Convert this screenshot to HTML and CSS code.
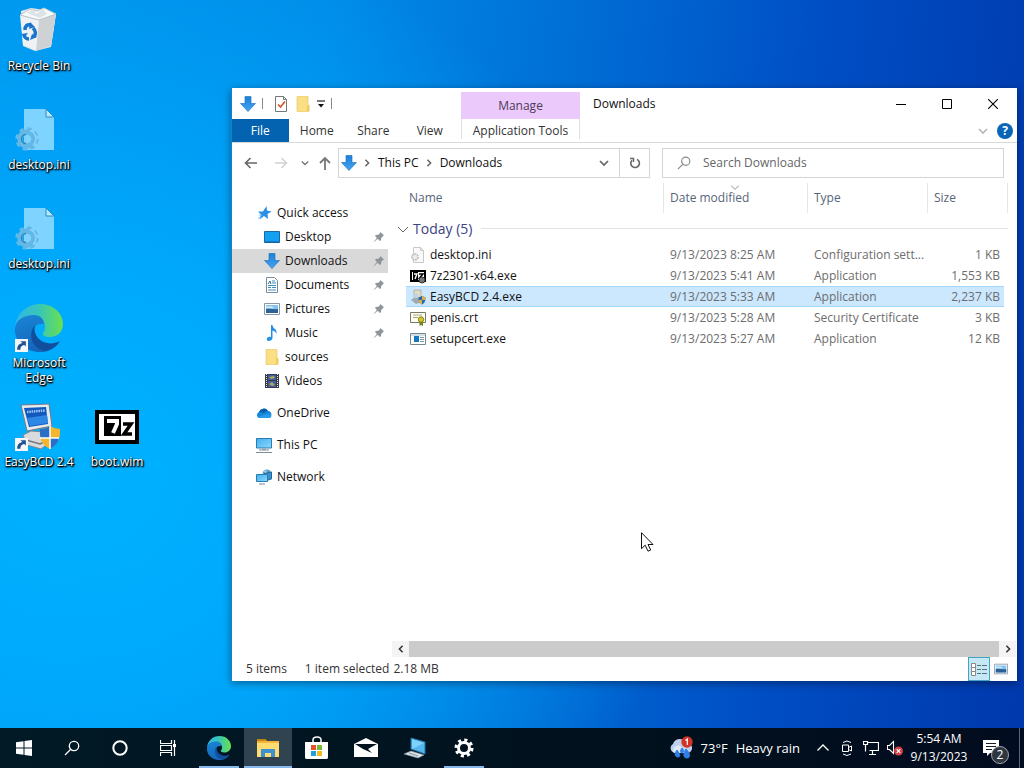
FILE: index.html
```html
<!DOCTYPE html>
<html lang="en">
<head>
<meta charset="utf-8">
<meta name="viewport" content="width=device-width, initial-scale=1">
<title>Downloads</title>
<link rel="stylesheet" href="styles.css">
</head>
<body>
<svg class="defs" aria-hidden="true">
  <defs>
    <linearGradient id="arrowBlue" x1="0" y1="0" x2="0" y2="1"><stop offset="0" stop-color="#1d7fd8"/><stop offset="1" stop-color="#45a4f2"/></linearGradient>
    <linearGradient id="edgeA" x1="0" y1="0.3" x2="1" y2="0.3"><stop offset="0" stop-color="#2fb5ea"/><stop offset="0.5" stop-color="#37c6b8"/><stop offset="1" stop-color="#6be04b"/></linearGradient>
    <linearGradient id="edgeB" x1="0" y1="0" x2="0.4" y2="1"><stop offset="0" stop-color="#1a86d8"/><stop offset="1" stop-color="#1465b8"/></linearGradient>
    <linearGradient id="screen" x1="0" y1="0" x2="1" y2="1"><stop offset="0" stop-color="#3fb0ee"/><stop offset="1" stop-color="#8fd8fb"/></linearGradient>
  </defs>
  <symbol id="i-down" viewBox="0 0 16 16"><path d="M5 .5h6v7h4.500L8 15.500.500 7.500H5z" fill="url(#arrowBlue)" stroke="#2178c4" stroke-width=".7"/></symbol>
  <symbol id="i-pin" viewBox="0 0 12 12"><path d="M7.500 1 11 4.500 9.800 5.200 8.300 6.700 8 9.300 6.900 10 4.700 7.700 1 11 .700 10.700 3.900 7 2 5l.8-1 2.600-.3L6.900 2.200z" fill="#8d949a"/></symbol>
  <symbol id="i-folder" viewBox="0 0 16 16"><path d="M2 .5h11v15H2z" fill="#fbdf83" stroke="#e8c45c" stroke-width=".6"/><path d="M12 9h2.500v6.500H12z" fill="#f1cb5f"/></symbol>
  <symbol id="i-chev" viewBox="0 0 10 10"><path d="M1 3l4 4 4-4" fill="none" stroke="currentColor" stroke-width="1.700"/></symbol>
  <symbol id="i-thin" viewBox="0 0 10 10"><path d="M0 3l5 5 5-5" fill="none" stroke="currentColor" stroke-width="1"/></symbol>
  <symbol id="i-chevr" viewBox="0 0 10 10"><path d="M3 1l4 4-4 4" fill="none" stroke="currentColor" stroke-width="1.900"/></symbol>
  <symbol id="i-search" viewBox="0 0 16 16"><circle cx="10" cy="6" r="4.700" fill="none" stroke="currentColor" stroke-width="1.300"/><path d="M6.500 9.500 1 15" stroke="currentColor" stroke-width="1.300"/></symbol>
  <symbol id="i-ini" viewBox="0 0 48 48">
    <path d="M9 3h22l8 8v33H9z" fill="#7fd3ff"/><path d="M31 3v8h8z" fill="#b6e8ff" stroke="#278ec5" stroke-width="1"/>
    <g transform="translate(12 33)"><circle r="7" fill="none" stroke="#62b8e6" stroke-width="5.500"/><circle r="10" fill="none" stroke="#62b8e6" stroke-width="3.500" stroke-dasharray="4.200 3.654"/><path d="M-1-4.500a4.500 4.500 0 0 0 0 9" fill="none" stroke="#2f86bd" stroke-width="1.500"/><path d="M3-8.500a9 9 0 0 1 3 15" fill="none" stroke="#8fd4f6" stroke-width="1.500"/></g>
  </symbol>
  <symbol id="i-edge" viewBox="0 0 48 48">
    <path d="M0 24C1 9 12 0 25 0c14 0 23 10 23 20 0 8-6 13-13 13-6 0-8-2-7-4 4-4 3-16-9-17C9 11 1 17 0 24z" fill="url(#edgeA)"/>
    <path d="M0 24C1 16 9 11 19 11c6 0 10 4 10 9-13-2-16 13-5 20 7 4 15 2 20-2C39 46 31 49 23 48 9 47-1 37 0 24z" fill="url(#edgeB)"/>
    <path d="M21 20c-9 9-5 24 9 27 8-2 12-5 15-10-9 5-20 2-24-6-2-4-2-8 0-11z" fill="#114f9e"/>
  </symbol>
  <symbol id="i-short" viewBox="0 0 12 12"><path d="M0 0h12v12H0z" fill="#f4f6fa"/><path d="M2 10c0-4 2-6 5-6L5 2h5v5L8.500 5.500C5.500 6 5 8 5 10z" fill="#205092"/></symbol>
  <symbol id="i-photo" viewBox="0 0 16 16"><path d="M.5 2.500h15v11H.5z" fill="#fff" stroke="#8c98a5"/><path d="M2 4h12v8H2z" fill="#83c4f4"/><path d="M2 8c3-3 5 1 12 0v4H2z" fill="#2c6296"/><path d="M2 5.500h6l2 2H2z" fill="#d4efff"/></symbol>
  <symbol id="i-pc" viewBox="0 0 16 16"><path d="M.5 1.500h15v9.500H.5z" fill="url(#screen)" stroke="#287cb1"/><path d="M6 11h4v2H6z" fill="#a5b5c3"/><path d="M3 13h10M0 15.500h16" stroke="#7d8b97" stroke-width="1"/></symbol>
</svg>

<div class="desktop">
  <main class="workspace">
    <div class="icons">
      <a class="icon" href="#bin">
        <svg viewBox="4 2 48 48"><path d="M10 6 20 3l14 2 11 4-5 33-16 4-12-5z" fill="#e5e8ea"/><path d="M9 10 28 15l17-7-5 33-15 4-13-5z" fill="#f0f1f2"/><path d="M28 15l17-7-5 33-15 5z" fill="#cfd2d5"/><path d="M9 10l10-6 7 2 7-3 12 6-17 6z" fill="#f9fafa" stroke="#b9c2c9"/><path d="m16 8 6-4 3 5 7-5 4 5-7 4z" fill="#dce2e5"/><g fill="none" stroke="#1975ce" stroke-width="3.500"><path d="M14 25c0-4 2-6 6-5M22 23c3 3 3 6 1 9M18 34c-3 0-5-2-5-5"/></g><path d="m19 17 5 5-6 2zM26 32l-7 3 2-6zM10 29l7-1-3 4z" fill="#1975ce"/></svg>
        <span>Recycle Bin</span></a>
      <a class="icon" href="#ini1"><svg><use href="#i-ini"/></svg><span>desktop.ini</span></a>
      <a class="icon" href="#ini2"><svg><use href="#i-ini"/></svg><span>desktop.ini</span></a>
      <a class="icon" href="#edge"><svg viewBox="0 0 48 48"><use href="#i-edge" width="48" height="48"/><use href="#i-short" x="0" y="35" width="13" height="13"/></svg><span>Microsoft Edge</span></a>
      <a class="icon" href="#easybcd">
        <svg viewBox="0 0 48 48"><path d="M8 32l8-4 16 1 5 9-11 8-14-4z" fill="#d9dadd" stroke="#80858c"/><path d="M11 37l14 4 10-5" fill="none" stroke="#777" stroke-width="1.500"/><path d="M6 2l28-1 3 22-25 5z" fill="#e6e9ed" stroke="#717985"/><path d="M9 5l22-1 2 17-19 3z" fill="#1358bc"/><path d="M12 15l20-3 1 8-18 3z" fill="#2d87e4"/><path d="M12 9l18-1.500" stroke="#9cc6f5" stroke-width="2.500" stroke-dasharray="1.500 .8"/><path d="M35 23c3 2 6 3 10 3 0 10-2 15-10 20-8-5-10-10-10-20 4 0 7-1 10-3z" fill="#f5b52d"/><path d="M35 23c3 2 6 3 10 3q0 5-1 9h-9zM35 35v11c-6-3-9-7-9.500-11z" fill="#f5b52d"/><path d="M35 23v12H25.500a30 30 0 0 1-.5-9c4 0 7-1 10-3zM35 35h9c-1 5-4 8-9 11z" fill="#2a6fc4"/><path d="M35 23v23M25 35h19" stroke="#fff" stroke-width="1.500"/><use href="#i-short" x="0" y="35" width="13" height="13"/></svg>
        <span>EasyBCD 2.4</span></a>
      <a class="icon" href="#boot">
        <svg viewBox="0 0 48 48"><path d="M4 9h40v30H4z" fill="#fff" stroke="#000" stroke-width="4"/><path d="M11 13h17v20H11z" fill="#000"/><path d="M14 18h10v3l-4 9" fill="none" stroke="#fff" stroke-width="4"/><path d="M30 21h8l-7 10h8" fill="none" stroke="#000" stroke-width="3.500"/></svg>
        <span>boot.wim</span></a>
    </div>

    <section class="window" aria-label="Downloads">
      <header class="header">
        <div class="head-left">
          <div class="quick">
            <svg class="s16"><use href="#i-down"/></svg><i class="bar"></i>
            <button aria-label="Properties"><svg class="s16" viewBox="0 0 16 16"><path d="M2.500.5h8l3 3v12h-11z" fill="#fff" stroke="#777"/><path d="M10.500.5v3h3" fill="none" stroke="#777"/><path d="M5 8.500l2.500 2.500L12 5.500" fill="none" stroke="#d4562d" stroke-width="1.700"/></svg></button>
            <button aria-label="New folder"><svg class="s16"><use href="#i-folder"/></svg></button>
            <button aria-label="Customize toolbar"><svg class="s8" viewBox="0 0 8 8"><path d="M0 1h8" stroke="#222" stroke-width="1.200"/><path d="M1 4h6L4 7.500z" fill="#111"/></svg></button><i class="bar"></i>
          </div>
          <nav class="tabs"><button class="tab file">File</button><button class="tab">Home</button><button class="tab">Share</button><button class="tab">View</button></nav>
        </div>
        <div class="context"><div class="manage">Manage</div><button class="tools">Application Tools</button></div>
        <div class="head-right">
          <div class="titlebar"><h1>Downloads</h1>
            <div class="controls">
              <button aria-label="Minimize"><svg class="s10" viewBox="0 0 10 10"><path d="M0 5.500h10" stroke="#000"/></svg></button>
              <button aria-label="Maximize"><svg class="s10" viewBox="0 0 10 10"><path d="M.5.500h9v9h-9z" fill="none" stroke="#000"/></svg></button>
              <button aria-label="Close"><svg class="s10" viewBox="0 0 10 10"><path d="M0 0l10 10M10 0 0 10" stroke="#000" stroke-width="1.100"/></svg></button>
            </div>
          </div>
          <div class="ribbon-end"><button class="pale" aria-label="Expand the ribbon"><svg class="s10"><use href="#i-chev"/></svg></button><button class="help" aria-label="Help">?</button></div>
        </div>
      </header>

      <div class="address-row">
        <div class="nav-buttons">
          <button class="n-back" aria-label="Back"><svg class="s14" viewBox="0 0 14 14"><path d="M13 7H2M6.500 2 1.500 7l5 5" fill="none" stroke="#666" stroke-width="1.600"/></svg></button>
          <button class="n-fwd" aria-label="Forward"><svg class="s14" viewBox="0 0 14 14"><path d="M1 7h11M7.500 2l5 5-5 5" fill="none" stroke="#d2d2d2" stroke-width="1.500"/></svg></button>
          <button class="n-recent" aria-label="Recent locations"><svg class="s8"><use href="#i-chev"/></svg></button>
          <button class="n-back" aria-label="Up"><svg class="s14" viewBox="0 0 14 14"><path d="M7 14V2M2 7l5-5 5 5" fill="none" stroke="#777" stroke-width="1.800"/></svg></button>
        </div>
        <div class="address">
          <svg class="s16"><use href="#i-down"/></svg>
          <svg class="s8 sep"><use href="#i-chevr"/></svg><button>This PC</button>
          <svg class="s8 sep"><use href="#i-chevr"/></svg><button>Downloads</button>
          <button class="drop" aria-label="Previous locations"><svg class="s10"><use href="#i-chev"/></svg></button>
          <button class="refresh" aria-label="Refresh"><svg class="s12" viewBox="0 0 12 12"><path d="M8 2.400A4.300 4.300 0 1 1 3 3.300" fill="none" stroke="#666" stroke-width="1.600"/><path d="M1 1.500h3.500V5" fill="none" stroke="#666" stroke-width="1.500"/></svg></button>
        </div>
        <label class="search"><svg class="s14"><use href="#i-search"/></svg><input type="search" placeholder="Search Downloads" aria-label="Search Downloads"></label>
      </div>

      <div class="body">
        <nav class="tree">
          <a class="node" href="#quick"><svg class="s16" viewBox="0 0 16 16"><path d="M10.500 1 11 5.500l4.500 1L11.500 9l.5 5-4-3-4.500 3.500 1.500-5L2 6.500h5z" fill="#2990e6"/><path d="M3 10h3M2 13h3" stroke="#7cbdf2"/></svg>Quick access</a>
          <a class="node sub" href="#desktop"><svg class="s16" viewBox="0 0 16 16"><path d="M.5 2.500h15v11H.5z" fill="#13a0f3" stroke="#1769a8"/><path d="M1 13h14" stroke="#135b97"/></svg>Desktop<svg class="pin"><use href="#i-pin"/></svg></a>
          <a class="node sub current" href="#downloads"><svg class="s16"><use href="#i-down"/></svg>Downloads<svg class="pin"><use href="#i-pin"/></svg></a>
          <a class="node sub" href="#documents"><svg class="s16" viewBox="0 0 16 16"><path d="M2.500.5h8l3 3v12h-11z" fill="#fff" stroke="#7b8b99"/><path d="M8 4h3M8 6h4M4 8.500h8M4 10.500h3M8 10.500h4M4 13h8" stroke="#3a8dc0"/><path d="M4 7l2-3 1 3" fill="none" stroke="#266e9d"/></svg>Documents<svg class="pin"><use href="#i-pin"/></svg></a>
          <a class="node sub" href="#pictures"><svg class="s16"><use href="#i-photo"/></svg>Pictures<svg class="pin"><use href="#i-pin"/></svg></a>
          <a class="node sub" href="#music"><svg class="s16" viewBox="0 0 16 16"><path d="M7 0h1.500c0 4 5 3.500 4 9-.5-2-2-3-4-3.500V13C8.500 15 6.500 16 4.500 16S2 13 4.500 12c1-.5 2-.3 2.500 0z" fill="#2490e4"/></svg>Music<svg class="pin"><use href="#i-pin"/></svg></a>
          <a class="node sub" href="#sources"><svg class="s16"><use href="#i-folder"/></svg>sources</a>
          <a class="node sub" href="#videos"><svg class="s16" viewBox="0 0 16 16"><path d="M1 1h14v14H1z" fill="#383b43"/><path d="M2.500 1v14M13.500 1v14" stroke="#e3e3e3" stroke-dasharray="1 1"/><path d="M4 2h8v5H4zM4 8h8v6H4z" fill="#3e5ea1"/><path d="M5 4l5-1 1 2-4 1zM5 11l3-2 3 3-3 1z" fill="#b5a84c"/></svg>Videos</a>
          <a class="node root" href="#onedrive"><svg class="s16" viewBox="0 0 16 16"><path d="M3 13a3.200 3.200 0 0 1 0-6 5 5 0 0 1 9-1 3.600 3.600 0 0 1 1 7z" fill="#1688dc"/><path d="M3 7a5 5 0 0 1 9-1c-2 0-3 1-4 2z" fill="#0b5ea9"/><path d="M2 13c3-3 7-4 11-4 3 1 3 4 0 4z" fill="#259ae9"/></svg>OneDrive</a>
          <a class="node root" href="#pc"><svg class="s16"><use href="#i-pc"/></svg>This PC</a>
          <a class="node root" href="#network"><svg class="s16" viewBox="0 0 16 16"><circle cx="11" cy="5" r="4.500" fill="#5e9fc7"/><path d="M8 2l4 4 3-1M10 0v8" stroke="#b3d7e9" fill="none"/><path d="M8.500 4.500 15.500 3v7l-7 2z" fill="#3a92cd" stroke="#206b9d"/><path d="M.5 5.500h11v7H.5z" fill="url(#screen)" stroke="#287cb1"/><path d="M3 15h6" stroke="#7d8b97"/></svg>Network</a>
        </nav>
        <div class="content">
          <div class="list">
          <table class="files">
            <colgroup><col class="c-lead"><col><col class="c-date"><col class="c-type"><col class="c-size"><col class="c-tail"></colgroup>
            <thead><tr><td></td><th scope="col">Name</th><th scope="col" class="sorted">Date modified<svg class="s8"><use href="#i-thin"/></svg></th><th scope="col">Type</th><th scope="col">Size</th><td></td></tr></thead>
            <tbody>
              <tr class="group"><th colspan="6" scope="rowgroup"><div><svg class="s10"><use href="#i-thin"/></svg><span>Today (5)</span><i></i></div></th></tr>
              <tr><td></td><td class="name"><svg class="s16" viewBox="0 0 16 16"><path d="M3.500.5h7l3 3v12h-10z" fill="#fafafa" stroke="#c8c8c8"/><path d="M10.500.5v3h3" fill="none" stroke="#c8c8c8"/><circle cx="5" cy="10" r="3" fill="#eee" stroke="#c4c8ca" stroke-width="2" stroke-dasharray="2 .6"/></svg>desktop.ini</td><td>9/13/2023 8:25 AM</td><td>Configuration sett...</td><td class="size">1 KB</td><td></td></tr>
              <tr><td></td><td class="name"><svg class="s16" viewBox="0 0 16 16"><path d="M1 3h14v10H1z" fill="#fff" stroke="#000" stroke-width="2"/><path d="M3 4h5v8H3z"/><path d="M4 6h3l-2 5" fill="none" stroke="#fff" stroke-width="1.400"/><path d="M9 6h4L9.500 10H13" fill="none" stroke="#000" stroke-width="1.500"/><circle cx="12" cy="12" r="3" fill="#777" stroke="#333"/></svg>7z2301-x64.exe</td><td>9/13/2023 5:41 AM</td><td>Application</td><td class="size">1,553 KB</td><td></td></tr>
              <tr class="selected"><td></td><td class="name"><svg class="s16" viewBox="0 0 16 16"><path d="M4 1h7v8H4z" fill="#e2dbc8" stroke="#aaa18d" stroke-width=".7"/><path d="M1 11l4-3 7 1v4l-6 2z" fill="#9eabb4"/><path d="M3 5h5v4H3z" fill="#bed3dd"/><path d="M12 7l3.500 1.500c0 4-1 5.500-3.500 7-2.500-1.500-3.500-3-3.500-7z" fill="#276aab"/><path d="M12 7l3.500 1.500V11H12zM12 11v4.500C10 14.500 9 13 8.600 11z" fill="#dfb143"/></svg>EasyBCD 2.4.exe</td><td>9/13/2023 5:33 AM</td><td>Application</td><td class="size">2,237 KB</td><td></td></tr>
              <tr><td></td><td class="name"><svg class="s16" viewBox="0 0 16 16"><path d="M.5 2.500h15v10H.5z" fill="#fffef2" stroke="#777765"/><path d="M3 5h9M3 7.500h5" stroke="#aaa58d"/><path d="M9.500 11v5l1.500-1 2 1v-5z" fill="#758222"/><circle cx="11" cy="9.500" r="2.700" fill="#d1ca24" stroke="#858018"/></svg>penis.crt</td><td>9/13/2023 5:28 AM</td><td>Security Certificate</td><td class="size">3 KB</td><td></td></tr>
              <tr><td></td><td class="name"><svg class="s16" viewBox="0 0 16 16"><path d="M.5 2.500h15v11H.5z" fill="#fff" stroke="#77868f"/><path d="M1 3h14v2H1z" fill="#d3dee5"/><path d="M4 5h5v6H4z" fill="#1478c0"/><path d="M10 6.500h4M10 8.500h4M10 10.500h4" stroke="#7397af"/></svg>setupcert.exe</td><td>9/13/2023 5:27 AM</td><td>Application</td><td class="size">12 KB</td><td></td></tr>
            </tbody>
          </table>
          </div>
          <div class="scroll"><button class="flip" aria-label="Scroll left"><svg class="s8"><use href="#i-chevr"/></svg></button><div class="thumb"></div><button aria-label="Scroll right"><svg class="s8"><use href="#i-chevr"/></svg></button></div>
        </div>
      </div>

      <footer class="status"><span class="count">5 items</span><span>1 item selected</span><span class="bytes">2.18 MB</span>
        <div class="views">
          <button class="active" aria-label="Details"><svg class="s16" viewBox="0 0 16 16"><path d="M.5 2.500h4v4h-4zM.5 6.500h4v4h-4zM.5 10.500h4v4h-4z" fill="#fff" stroke="#888"/><path d="M6 4.500h4M11 4.500h5M6 8.500h4M11 8.500h5M6 12.500h4M11 12.500h5" stroke="#56727d"/></svg></button>
          <button aria-label="Large icons"><svg class="s14"><use href="#i-photo"/></svg></button>
        </div>
      </footer>
    </section>
    <svg class="cursor" viewBox="0 0 13 20"><path d="M.5.700v16l3.700-3.500L7 19.200l2.700-1.200L7 12.500h5z" fill="#fff" stroke="#111"/></svg>
  </main>

  <footer class="taskbar">
    <div class="system">
      <button aria-label="Start"><svg class="s16" viewBox="0 0 16 16"><path d="M0 2.300 7.500 1.200v6.300H0zM8.500 1 16 0v7.500H8.500zM0 8.500h7.500v6.300L0 13.700zM8.500 8.500H16V16l-7.500-1z" fill="#fff"/></svg></button>
      <button aria-label="Search"><svg class="s16"><use href="#i-search"/></svg></button>
      <button aria-label="Cortana"><svg class="s16" viewBox="0 0 16 16"><circle cx="8" cy="8" r="6.700" fill="none" stroke="#fff" stroke-width="2"/></svg></button>
      <button aria-label="Task View"><svg class="s16" viewBox="0 0 16 16"><path d="M.5 0v3.500h11V0M.5 16v-3.500h11V16M.5 5.500h11v5H.5zM14.500 0v16" fill="none" stroke="#fff" stroke-width="1.200"/><path d="M13 4h3v3h-3z" fill="#fff"/></svg></button>
    </div>
    <div class="apps">
      <button class="open" aria-label="Microsoft Edge"><svg class="s24"><use href="#i-edge"/></svg></button>
      <button class="open front" aria-label="File Explorer"><svg class="s24" viewBox="0 0 24 24"><path d="M1 3h8l2 2h12v16H1z" fill="#f5b73b"/><path d="M1 3h8l2 2H1z" fill="#c8820e"/><path d="M1 7h22v14H1z" fill="#ffdc72"/><path d="M5 21v-8h14v8h-4v-4H9v4z" fill="#3e91cf"/></svg></button>
      <button aria-label="Microsoft Store"><svg class="s24" viewBox="0 0 24 24"><path d="M8 7V4c0-4 8-4 8 0v3" fill="none" stroke="#fff" stroke-width="1.500"/><path d="M0 6h23v15c0 2-1 2-2 2H2c-2 0-2-1-2-2z" fill="#fff"/><path d="M6 9h5v5H6z" fill="#e8512f"/><path d="M12 9h5v5h-5z" fill="#7ab832"/><path d="M6 15h5v5H6z" fill="#219fd9"/><path d="M12 15h5v5h-5z" fill="#f5b722"/></svg></button>
      <button aria-label="Mail"><svg class="s24" viewBox="0 0 24 24"><path d="M0 8 12 2l12 6v13H0z" fill="#fff"/><path d="M1 8h22l-9 5 4 4-9-4z" fill="#03131d"/></svg></button>
      <button aria-label="Computer"><svg class="s24" viewBox="0 0 24 24"><path d="M8 2l14 4v12L8 13z" fill="#55b6ee" stroke="#1d70a4"/><path d="M9 3l12 4-12 6z" fill="#7ed2fa"/><path d="M1 18l7-3 13 4-6 3z" fill="#dfe4e8" stroke="#8496a2" stroke-width=".6"/><path d="M6 17l9 3" stroke="#8496a2" stroke-width="1.200"/></svg></button>
      <button class="open" aria-label="Settings"><svg class="s20" viewBox="0 0 20 20"><circle cx="10" cy="10" r="5.500" fill="none" stroke="#fff" stroke-width="3"/><circle cx="10" cy="10" r="8" fill="none" stroke="#fff" stroke-width="3" stroke-dasharray="3.140 3.140"/></svg></button>
    </div>
    <div class="tray">
      <button class="weather"><svg class="s24" viewBox="0 0 24 24"><path d="M5 17a5 5 0 0 1-1-9 7 7 0 0 1 13-1 5 5 0 0 1 2 10z" fill="#bfd0ee"/><path d="M4 16c0-6 6-8 8-5l4 6z" fill="#e0e9f8"/><path d="M8 14c3 4 4 7 1 7s-4-3-1-7zM17 13c4 4 5 9 1 9s-4-4-1-9zM13 12c2 2 2 5 0 5s-2-3 0-5z" fill="#2f7fe8" stroke="#2f7fe8"/><circle cx="18" cy="6" r="5.700" fill="#d33427"/><path d="M16.500 4.500 18.300 3v6" fill="none" stroke="#fff" stroke-width="1.200"/></svg><span>73°F</span><span>Heavy rain</span></button>
      <button class="t24 flip-up" aria-label="Show hidden icons"><svg class="s14" viewBox="0 0 14 14"><path d="M1.500 4.500 7 10l5.500-5.500" fill="none" stroke="#fff" stroke-width="1.300"/></svg></button>
      <button class="t24" aria-label="Meet Now"><svg class="s16" viewBox="0 0 16 16"><path d="M3.500 5h6v6.500h-6zM9.500 7.500l3-1.500v5l-3-1.500M4 2.500q4-3 8 0M4 14q4 3 8 0" fill="none" stroke="#fff"/></svg></button>
      <button class="t24" aria-label="Network"><svg class="s16" viewBox="0 0 16 16"><path d="M4.500 2.500h11v8h-9M.5 1.500h4v3h-4zM2.500 4.500v7M6 14.500h7M9.500 11v3" fill="none" stroke="#fff" stroke-width="1.200"/></svg></button>
      <button class="t24" aria-label="Volume muted"><svg class="s16" viewBox="0 0 16 16"><path d="M.5 5.500h2l4-4v12l-4-4h-2z" fill="none" stroke="#fff" stroke-width="1.100"/><circle cx="11.500" cy="11" r="4.500" fill="#cf4146"/><path d="M9.700 9.200l3.600 3.600M13.300 9.200l-3.600 3.600" stroke="#fff" stroke-width="1.200"/></svg></button>
      <button class="clock"><time>5:54 AM</time><time>9/13/2023</time></button>
      <button class="notify" aria-label="2 notifications"><svg class="s16" viewBox="0 0 16 16"><path d="M0 0h16v13H7l-3 3v-3H0z" fill="#fff"/><path d="M3 3.500h10M3 6.500h10M3 9.500h6" stroke="#10202b" stroke-width="1.200"/></svg><span class="badge">2</span></button>
    </div>
  </footer>
</div>
</body>
</html>
```
FILE: styles.css
```css
* { box-sizing: border-box; }
body { margin: 0; font-family: "Open Sans", "Noto Sans", sans-serif; font-size: 12px; line-height: 16px; color: #111; }
button { border: 0; padding: 0; background: none; font: inherit; color: inherit; display: flex; align-items: center; justify-content: center; white-space: nowrap; }
a { color: inherit; text-decoration: none; }
svg { flex: none; display: block; }
.defs { position: absolute; width: 0; height: 0; }
.s8 { width: 8px; height: 8px; }
.s10 { width: 10px; height: 10px; }
.s12 { width: 12px; height: 12px; }
.s14 { width: 14px; height: 14px; }
.s16 { width: 16px; height: 16px; }
.s20 { width: 20px; height: 20px; }
.s24 { width: 24px; height: 24px; }

.desktop {
  min-height: 100vh; display: flex; flex-direction: column;
  background:
    radial-gradient(ellipse 60% 72% at 8% 62%, #00b2ff 0%, rgba(0, 172, 255, 0.85) 40%, rgba(0, 150, 245, 0) 100%),
    linear-gradient(96deg, #0094ec 0%, #008ce8 30%, #006cd4 54%, #004ec4 75%, #0038ac 100%);
}
.workspace { flex: 1; position: relative; min-height: 520px; }
.icons { display: grid; grid-template-columns: 78px 78px; grid-auto-rows: 99px; }
.icon { grid-column: 1; display: flex; flex-direction: column; align-items: center; gap: 3px; padding: 7px 4px 0; color: #fff; text-align: center; line-height: 15px; text-shadow: 0 1px 2px #000, 1px 1px 2px #000, 1px 1px 1px #000; }
.icon:last-child { grid-column: 2; grid-row: 5; }
.icon svg { width: 48px; height: 48px; }

.window { position: absolute; inset: 88px 7px 47px 231px; display: flex; flex-direction: column; background: #fff; border: 1px solid #1681c8; border-width: 0 0 0 1px; box-shadow: 0 2px 8px rgba(0, 0, 0, 0.4); }
.header { display: flex; height: 55px; border-bottom: 1px solid #d6d8da; }
.head-left { width: 229px; display: flex; flex-direction: column; padding-right: 3px; }
.quick { flex: 1; display: flex; align-items: center; gap: 6px; padding-left: 8px; }
.bar { width: 1px; height: 11px; background: #888; }
.quick .bar:nth-child(2) { margin-right: 4px; }
.tabs { display: flex; height: 23px; }
.tab { flex: 1; color: #333; }
.file { background: #0463b1; color: #fff; }
.context { width: 119px; padding-top: 4px; display: flex; flex-direction: column; }
.manage { height: 27px; display: flex; align-items: center; justify-content: center; background: #ebc9fa; color: #4d3a57; }
.tools { height: 20px; padding-top: 3px; border: 1px solid #e2dfe4; border-width: 0 1px; color: #333; }
.head-right { flex: 1; display: flex; flex-direction: column; }
.titlebar { display: flex; align-items: center; justify-content: space-between; height: 31px; padding-left: 13px; }
.titlebar h1 { margin: 0; font-size: 12px; font-weight: 400; }
.controls { display: flex; height: 31px; padding-right: 1px; }
.controls button { width: 46px; }
.ribbon-end { flex: 1; display: flex; align-items: center; justify-content: flex-end; gap: 9px; padding-right: 4px; }
.pale { color: #b7b7b7; }
.help { width: 16px; height: 16px; border-radius: 50%; background: #0965b5; color: #fff; font-weight: 700; }

.address-row { display: grid; grid-template-columns: auto 324fr 342fr; align-items: center; height: 40px; padding: 0 13px 0 6px; }
.nav-buttons { display: flex; color: #777; }
.n-back { width: 26px; }
.n-fwd { width: 34px; }
.n-recent { width: 14px; }
.address { min-width: 0; height: 30px; display: flex; align-items: center; border: 1px solid #d5d5d5; padding-left: 2px; margin-right: 12px; }
.sep { margin: 0 7px 0 6px; color: #666; }
.address .drop { margin-left: auto; width: 30px; height: 100%; color: #666; }
.address .refresh { width: 30px; height: 100%; border-left: 1px solid #d5d5d5; }
.search { min-width: 0; height: 30px; display: flex; align-items: center; gap: 12px; border: 1px solid #d5d5d5; padding-left: 14px; color: #888; }
.search input { flex: 1; min-width: 0; border: 0; padding: 0; outline: 0; font: inherit; background: none; }
.search input::placeholder { color: #666; opacity: 1; }

.body { flex: 1; min-height: 0; display: flex; }
.tree { width: 156px; padding-top: 18px; }
.node { display: flex; align-items: center; gap: 5px; height: 24px; padding: 0 3px 0 24px; }
.sub { padding-left: 32px; }
.root { margin-top: 8px; }
.current { background: #d9d9d9; }
.pin { width: 12px; height: 12px; margin-left: auto; }
.content { flex: 1; min-width: 0; display: flex; flex-direction: column; padding-left: 4px; }
.list { flex: 1; padding: 0 9px 0 6px; }
.files { width: 100%; table-layout: fixed; border-collapse: separate; border-spacing: 0; color: #6d6d6d; }
.c-lead { width: 8px; }
.c-date { width: 144px; }
.c-type { width: 120px; }
.c-size { width: 77px; }
.c-tail { width: 4px; }
.files td, .files th { height: 21px; padding: 0; text-align: left; font-weight: 400; white-space: nowrap; overflow: hidden; }
.files thead th { height: 30px; color: #56657a; padding-left: 6px; border-left: 1px solid #e6e6e6; }
.files thead th:nth-child(2) { border: 0; padding-left: 3px; }
.files thead td:last-child { border-right: 1px solid #e6e6e6; }
.files .sorted { position: relative; overflow: visible; }
.sorted svg { position: absolute; top: 0; left: 47%; color: #777; }
.files .group th { height: 31px; }
.group div { display: flex; align-items: center; gap: 5px; font-size: 14px; color: #3a4384; }
.group svg { color: #666; }
.group i { flex: 1; height: 1px; margin-left: 4px; background: #e2e2e2; }
.files tbody td { padding-left: 7px; }
.files tbody td:first-child, .files tbody td:last-child { padding: 0; }
.files .name { display: flex; align-items: center; gap: 4px; padding-left: 4px; color: #111; }
.files .size { text-align: right; padding-right: 4px; }
.selected td:not(:first-child):not(:last-child) { background: #cce8ff; box-shadow: inset 0 1px #a5d6fb, inset 0 -1px #a5d6fb; }
.scroll { display: flex; height: 16px; padding-right: 1px; color: #333; }
.scroll button { width: 17px; background: #f4f4f4; }
.flip svg { transform: scaleX(-1); }
.thumb { flex: 1; background: #cbcbcb; }

.status { display: flex; align-items: center; height: 24px; padding-left: 14px; color: #333; }
.count { margin-right: 18px; }
.bytes { margin-left: 4px; }
.views { display: flex; margin-left: auto; padding-right: 5px; height: 24px; }
.views button { width: 22px; }
.views .active { background: #c5e8f4; border: 1px solid #44a3c4; }
.cursor { position: absolute; left: 641px; top: 532px; width: 13px; height: 20px; }

.taskbar { height: 40px; display: flex; justify-content: space-between; background: linear-gradient(90deg, #011a26, #01111d 60%, #020c20); color: #fff; }
.system, .apps, .tray { display: flex; }
.system button { width: 48px; }
.apps { gap: 1px; margin: 0 auto 0 3px; }
.apps button { width: 48px; }
.apps .open { background: linear-gradient(#87b8ec, #87b8ec) center bottom / 40px 2px no-repeat; }
.apps .front { background-color: #2f4450; background-size: 48px 2px; }
.weather { gap: 8px; padding-right: 11px; font-size: 13px; }
.t24 { width: 24px; }
.flip-up svg { transform: scaleY(-1); }
.clock { flex-direction: column; width: 64px; line-height: 18px; }
.notify { position: relative; width: 49px; padding-right: 8px; margin-right: 4px; border-right: 1px solid #5b6578; }
.badge { position: absolute; left: 20px; top: 18px; width: 18px; height: 18px; border: 1px solid #9da3ab; border-radius: 50%; background: #30363f; font-size: 12px; line-height: 16px; }
```
